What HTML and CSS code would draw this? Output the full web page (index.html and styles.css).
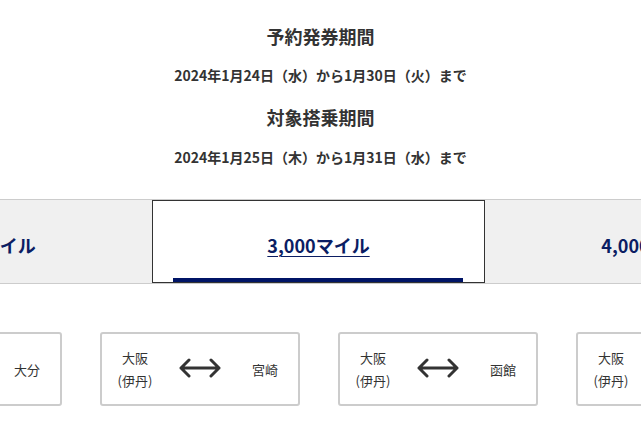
FILE: index.html
```html
<!DOCTYPE html>
<html lang="ja">
<head>
<meta charset="utf-8">
<link rel="stylesheet" href="styles.css">
</head>
<body>
<section class="periods">
  <h2 class="period-title">予約発券期間</h2>
  <p class="period-date">2024年1月24日（水）から1月30日（火）まで</p>
  <h2 class="period-title second">対象搭乗期間</h2>
  <p class="period-date">2024年1月25日（木）から1月31日（水）まで</p>
</section>

<nav class="tabs">
  <div class="tab-track">
    <div class="tab"><span class="tab-label">2,000マイル</span></div>
    <div class="tab active"><a class="tab-label" href="#">3,000マイル</a><span class="tab-bar"></span></div>
    <div class="tab"><span class="tab-label">4,000マイル</span></div>
  </div>
</nav>

<section class="routes">
  <div class="route-track">
    <div class="route">
      <div class="city">大阪<br>(伊丹)</div>
      <svg class="arrow" width="44" height="20" viewBox="0 0 44 20"><path d="M3 10H41M11 2L3 10L11 18M33 2L41 10L33 18" fill="none" stroke="#333" stroke-width="3" stroke-linecap="round" stroke-linejoin="round"/></svg>
      <div class="city">大分</div>
    </div>
    <div class="route">
      <div class="city">大阪<br>(伊丹)</div>
      <svg class="arrow" width="44" height="20" viewBox="0 0 44 20"><path d="M3 10H41M11 2L3 10L11 18M33 2L41 10L33 18" fill="none" stroke="#333" stroke-width="3" stroke-linecap="round" stroke-linejoin="round"/></svg>
      <div class="city">宮崎</div>
    </div>
    <div class="route">
      <div class="city">大阪<br>(伊丹)</div>
      <svg class="arrow" width="44" height="20" viewBox="0 0 44 20"><path d="M3 10H41M11 2L3 10L11 18M33 2L41 10L33 18" fill="none" stroke="#333" stroke-width="3" stroke-linecap="round" stroke-linejoin="round"/></svg>
      <div class="city">函館</div>
    </div>
    <div class="route">
      <div class="city">大阪<br>(伊丹)</div>
      <svg class="arrow" width="44" height="20" viewBox="0 0 44 20"><path d="M3 10H41M11 2L3 10L11 18M33 2L41 10L33 18" fill="none" stroke="#333" stroke-width="3" stroke-linecap="round" stroke-linejoin="round"/></svg>
      <div class="city">釧路</div>
    </div>
  </div>
</section>
</body>
</html>
```

FILE: styles.css
```css
* { box-sizing: border-box; }
html, body { margin: 0; padding: 0; background: #fff; }
body {
  width: 641px;
  overflow: hidden;
  font-family: "Noto Sans CJK JP", "Noto Sans", sans-serif;
  color: #333;
}
.periods {
  padding-top: 23px;
  text-align: center;
}
.period-title {
  margin: 0;
  font-size: 18px;
  line-height: 26px;
  font-weight: 700;
}
.period-title.second { margin-top: 19px; }
.period-date {
  margin: 16px 0 0;
  font-size: 14px;
  line-height: 20px;
  font-weight: 700;
}
.period-title.second + .period-date { margin-top: 17px; }

.tabs {
  margin-top: 32px;
  border-top: 1px solid #ccc;
  border-bottom: 1px solid #ccc;
  background: #f0f0f0;
  overflow: hidden;
}
.tab-track {
  display: flex;
  margin-left: -183px;
}
.tab {
  flex: 0 0 335px;
  height: 83px;
  display: flex;
  flex-direction: column;
  align-items: center;
  padding-top: 33px;
}
.tab-label {
  font-size: 18px;
  line-height: 24px;
  font-weight: 700;
  color: #0b1d63;
  text-decoration: none;
}
.tab.active {
  flex-basis: 333px;
  background: #fff;
  border: 1px solid #333;
  padding-top: 32px;
}
.tab.active .tab-label {
  text-decoration: underline;
  text-underline-offset: 3px;
  text-decoration-thickness: 1px;
}
.tab-bar {
  margin-top: auto;
  align-self: stretch;
  margin-left: 20px;
  margin-right: 21px;
  height: 4px;
  background: #001466;
}

.routes {
  margin-top: 48px;
  overflow: hidden;
}
.route-track {
  display: flex;
  gap: 38px;
  margin-left: -138px;
}
.route {
  flex: 0 0 200px;
  height: 74px;
  border: 2px solid #ccc;
  border-radius: 3px;
  display: grid;
  grid-template-columns: 66px 1fr 66px;
  align-items: center;
  justify-items: center;
  font-size: 13px;
  line-height: 23px;
  color: #333;
  text-align: center;
}
.arrow { display: block; margin-top: -3px; }
```
